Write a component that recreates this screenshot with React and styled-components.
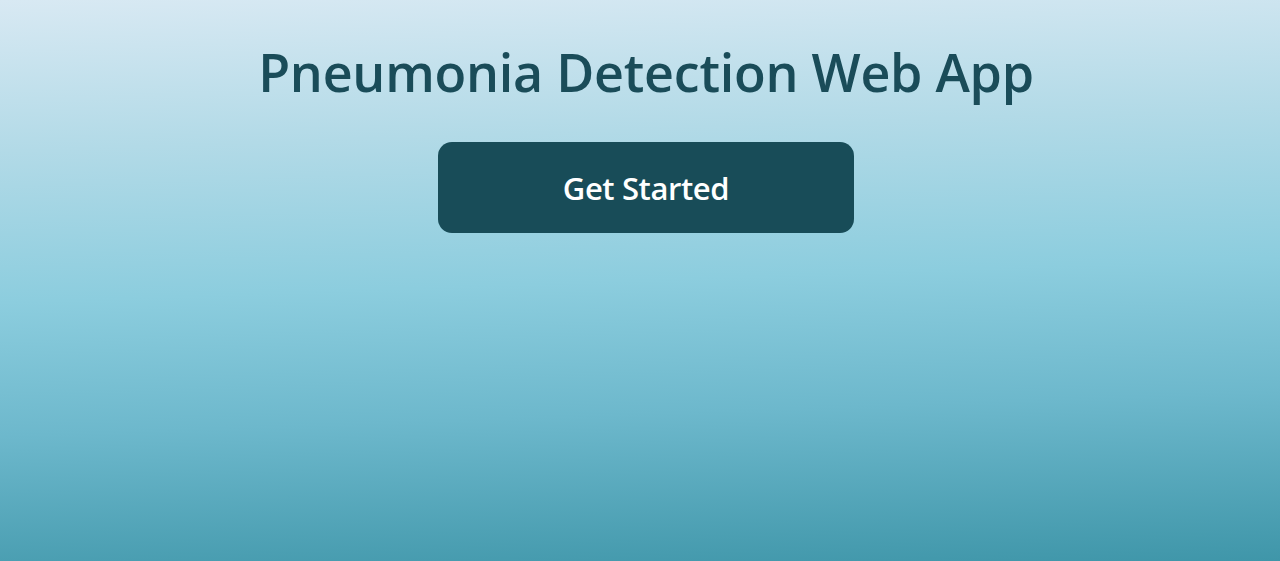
import React from "react";
import styled, { createGlobalStyle } from "styled-components";

const Global = createGlobalStyle`
  html, body { margin: 0; padding: 0; height: 100%; }
  body { font-family: "Open Sans", "Noto Sans", sans-serif; }
  #root { min-height: 100vh; }
`;

const Page = styled.main`
  min-height: 100vh;
  box-sizing: border-box;
  display: flex;
  flex-direction: column;
  align-items: center;
  padding: 37px 0 0 12px;
  background: linear-gradient(178deg, #d8e9f3 0%, #b2dae7 25%, #8ccdde 50%, #6db8cc 72%, #3f96a9 100%);
`;

const Title = styled.h1`
  margin: 0;
  font-family: "Open Sans", "Noto Sans", sans-serif;
  font-weight: 600;
  font-size: 52px;
  line-height: 70px;
  color: #1a4c59;
  letter-spacing: -0.25px;
`;

const StartButton = styled.button`
  margin-top: 35px;
  width: 416px;
  height: 91px;
  border: none;
  border-radius: 14px;
  background: #184c58;
  color: #ffffff;
  font-family: "Open Sans", "Noto Sans", sans-serif;
  font-weight: 600;
  font-size: 31px;
  letter-spacing: -0.4px;
  cursor: pointer;
`;

export default function App() {
  return (
    <>
      <Global />
      <Page>
        <Title>Pneumonia Detection Web App</Title>
        <StartButton>Get Started</StartButton>
      </Page>
    </>
  );
}
